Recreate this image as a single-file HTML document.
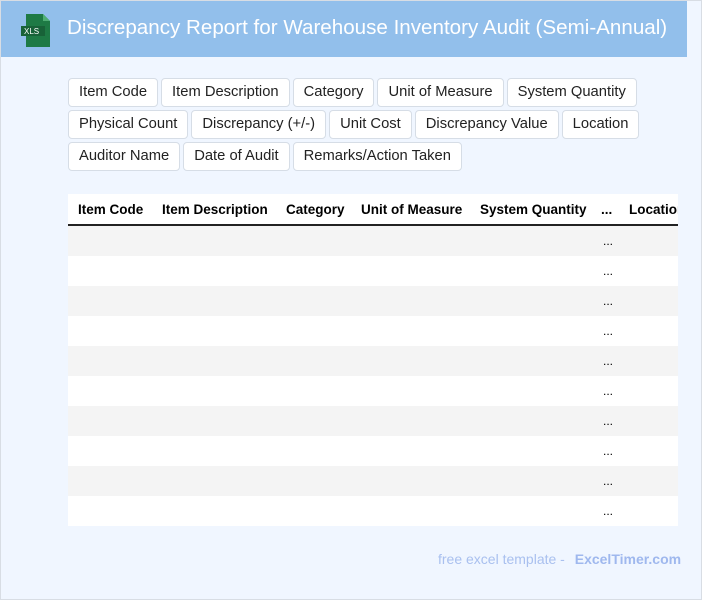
<!DOCTYPE html>
<html><head><style>
body{margin:0;width:702px;height:600px;overflow:hidden;font-family:"Liberation Sans",Arial,sans-serif;}
.wrap{position:absolute;left:0;top:0;width:700px;height:598px;border:1px solid #d8dde4;background:#f0f6ff;}
.hdr{position:absolute;left:0;top:0;width:686px;height:56px;background:#92bfeb;}
.hdr h1{position:absolute;left:66px;top:15px;margin:0;font-size:20.6px;font-weight:normal;color:#fff;white-space:nowrap;}
.chips{position:absolute;left:67px;top:77px;width:600px;}
.chip{display:inline-block;box-sizing:border-box;height:29px;line-height:27px;padding:0 10px;margin:0 3px 3px 0;background:#fff;border:1px solid #d6dde6;border-radius:4px;font-size:14.75px;color:#222;}
table{position:absolute;left:67px;top:193px;width:610px;border-collapse:collapse;background:#fff;table-layout:fixed;}
th{height:30px;font-size:13.5px;text-align:left;padding:0 0 0 10px;border-bottom:2px solid #222;white-space:nowrap;overflow:hidden;}
td{height:30px;padding:0 0 0 8px;font-size:12px;}
tr:nth-child(even) td{background:#f4f4f4;}
.foot{position:absolute;left:437px;top:550px;font-size:14px;color:#a9c0ef;}
.foot b{margin-left:6px;color:#9fb8ee;}
</style></head><body><div class="wrap">
<div class="hdr">
<svg style="position:absolute;left:19px;top:13px" width="32" height="33" viewBox="0 0 32 33"><path d="M6 0h17l7 7v26H6z" fill="#1e7a45"/><path d="M23 0v7h7z" fill="#4fae74"/><rect x="1" y="12" width="24" height="10" fill="#186238"/><text x="4" y="20" font-size="8" fill="#fff" font-family="Liberation Sans">XLS</text></svg>
<h1>Discrepancy Report for Warehouse Inventory Audit (Semi-Annual)</h1></div>
<div class="chips">
<span class="chip">Item Code</span><span class="chip">Item Description</span><span class="chip">Category</span><span class="chip">Unit of Measure</span><span class="chip">System Quantity</span><br>
<span class="chip">Physical Count</span><span class="chip">Discrepancy (+/-)</span><span class="chip">Unit Cost</span><span class="chip">Discrepancy Value</span><span class="chip">Location</span><br>
<span class="chip">Auditor Name</span><span class="chip">Date of Audit</span><span class="chip">Remarks/Action Taken</span>
</div>
<table>
<colgroup><col style="width:84px"><col style="width:124px"><col style="width:75px"><col style="width:119px"><col style="width:125px"><col style="width:24px"><col style="width:59px"></colgroup>
<tr><th>Item Code</th><th>Item Description</th><th>Category</th><th>Unit of Measure</th><th>System Quantity</th><th style="padding-left:6px">...</th><th>Location</th></tr>
<tr><td></td><td></td><td></td><td></td><td></td><td>...</td><td></td></tr>
<tr><td></td><td></td><td></td><td></td><td></td><td>...</td><td></td></tr>
<tr><td></td><td></td><td></td><td></td><td></td><td>...</td><td></td></tr>
<tr><td></td><td></td><td></td><td></td><td></td><td>...</td><td></td></tr>
<tr><td></td><td></td><td></td><td></td><td></td><td>...</td><td></td></tr>
<tr><td></td><td></td><td></td><td></td><td></td><td>...</td><td></td></tr>
<tr><td></td><td></td><td></td><td></td><td></td><td>...</td><td></td></tr>
<tr><td></td><td></td><td></td><td></td><td></td><td>...</td><td></td></tr>
<tr><td></td><td></td><td></td><td></td><td></td><td>...</td><td></td></tr>
<tr><td></td><td></td><td></td><td></td><td></td><td>...</td><td></td></tr>
</table>
<div class="foot">free excel template - <b>ExcelTimer.com</b></div>
</div></body></html>
